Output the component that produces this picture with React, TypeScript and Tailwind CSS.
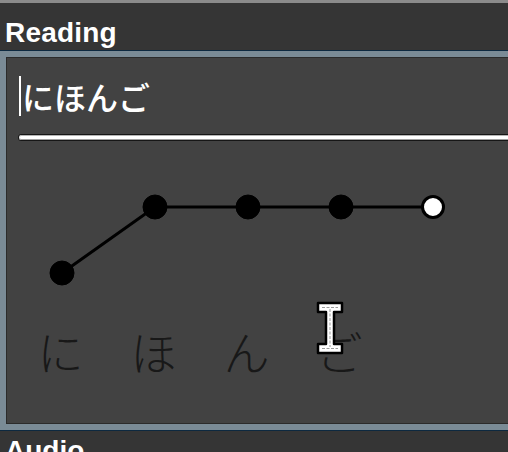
const LABELS = ['に', 'ほ', 'ん', 'ご'];

// pitch pattern: low, then high for the rest; last dot is the particle
const DOTS = [
  { x: 56, y: 93, particle: false },
  { x: 149, y: 27, particle: false },
  { x: 242, y: 27, particle: false },
  { x: 335, y: 27, particle: false },
  { x: 427, y: 27, particle: true },
];

function PitchGraph() {
  const points = DOTS.map((d) => `${d.x},${d.y}`).join(' ');
  return (
    <svg width="502" height="120" viewBox="0 0 502 120" className="block">
      <polyline points={points} fill="none" stroke="#000" strokeWidth="3" />
      {DOTS.map((d) => (
        <circle
          key={d.x}
          cx={d.x}
          cy={d.y}
          r={d.particle ? 10.5 : 12}
          fill={d.particle ? '#fff' : '#000'}
          stroke="#000"
          strokeWidth={d.particle ? 3 : 1}
        />
      ))}
    </svg>
  );
}

function IBeam() {
  return (
    <svg
      width="28"
      height="54"
      viewBox="0 0 28 54"
      className="pointer-events-none absolute left-[316px] top-[301px]"
    >
      <path
        d="M2 2 H26 V11 H18 V43 H26 V52 H2 V43 H10 V11 H2 Z"
        fill="#fff"
        stroke="#000"
        strokeWidth="2.5"
        strokeLinejoin="round"
      />
      <path d="M6 6.5 H22 M6 47.5 H22 M14 8 V46" stroke="#9a9a9a" strokeWidth="1" strokeDasharray="3 1.5" />
    </svg>
  );
}

export default function App() {
  return (
    <div
      className="relative h-[452px] w-[508px] overflow-hidden bg-[#353535]"
      style={{ fontFamily: '"Liberation Sans", "Noto Sans CJK JP", sans-serif' }}
    >
      <div className="h-[3px] bg-[#8b8b8b]" />
      <div className="pl-[5px] pt-[14px] text-[28px] font-bold leading-[32px] tracking-[0.2px] text-white">
        Reading
      </div>

      {/* reading panel */}
      <div className="mt-[2px] h-[379px] w-[540px] border-[6px] border-[#7a8b96] bg-[#424242] shadow-[0_0_0_1px_#0d2940,inset_0_0_0_1px_#2b2b2b]">
        <div className="flex items-center pl-[13px] pt-[19px]">
          <span className="h-[40px] w-[2px] bg-white" />
          <span
            className="ml-[1px] text-[32px] font-medium leading-[40px] text-white"
            style={{ fontFamily: '"Noto Sans CJK JP", sans-serif' }}
          >
            にほんご
          </span>
        </div>
        <div className="ml-[13px] mt-[19px] h-[5px] rounded-l-full bg-white shadow-[0_0_0_1px_#161616,inset_0_1px_0_#b5b5b5,inset_0_-1px_0_#a0a0a0]" />

        <div className="mt-[40px]">
          <PitchGraph />
        </div>

        <div
          className="ml-[8px] mt-[27px] flex text-[46px] font-light leading-[46px] text-[#181818]"
          style={{ fontFamily: '"Noto Sans CJK JP", sans-serif' }}
        >
          {LABELS.map((l, i) => (
            <span key={i} className="w-[93px] text-center">
              {l}
            </span>
          ))}
        </div>
      </div>

      <div className="pl-[5px] pt-[5px] text-[28px] font-bold leading-[32px] text-white">Audio</div>

      <IBeam />
    </div>
  );
}
